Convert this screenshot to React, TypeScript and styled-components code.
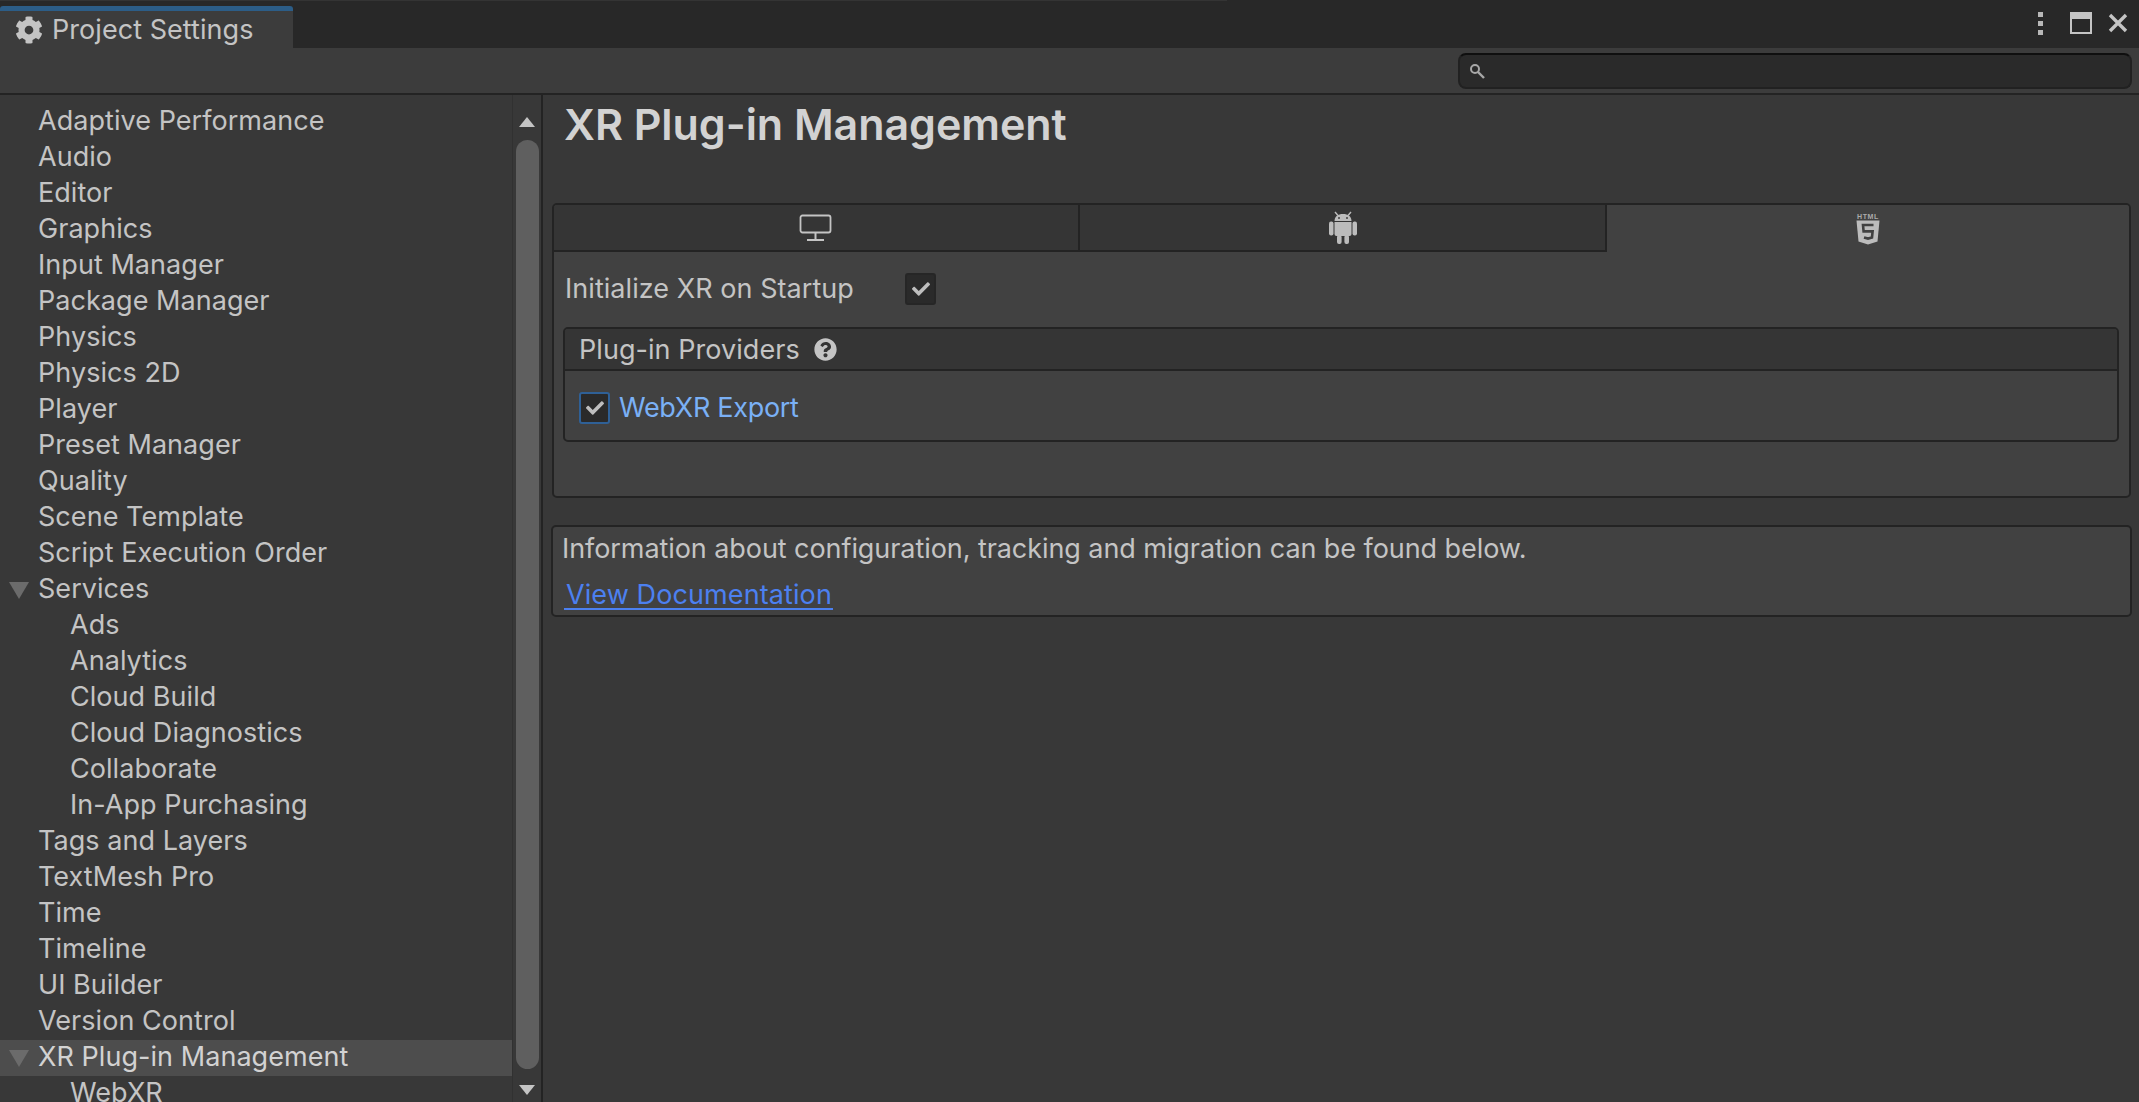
import React from "react";
import styled, { createGlobalStyle } from "styled-components";
import { FaCheck, FaCog, FaQuestionCircle } from "react-icons/fa";

const GlobalStyle = createGlobalStyle`
  html, body {
    margin: 0;
    padding: 0;
    height: 100%;
    overflow: hidden;
    background: #383838;
    font-family: Inter, "Noto Sans", sans-serif;
    color: #c4c4c4;
  }
  * { box-sizing: border-box; }
`;

const items: { label: string; depth?: number; open?: boolean; selected?: boolean }[] = [
  { label: "Adaptive Performance" },
  { label: "Audio" },
  { label: "Editor" },
  { label: "Graphics" },
  { label: "Input Manager" },
  { label: "Package Manager" },
  { label: "Physics" },
  { label: "Physics 2D" },
  { label: "Player" },
  { label: "Preset Manager" },
  { label: "Quality" },
  { label: "Scene Template" },
  { label: "Script Execution Order" },
  { label: "Services", open: true },
  { label: "Ads", depth: 1 },
  { label: "Analytics", depth: 1 },
  { label: "Cloud Build", depth: 1 },
  { label: "Cloud Diagnostics", depth: 1 },
  { label: "Collaborate", depth: 1 },
  { label: "In-App Purchasing", depth: 1 },
  { label: "Tags and Layers" },
  { label: "TextMesh Pro" },
  { label: "Time" },
  { label: "Timeline" },
  { label: "UI Builder" },
  { label: "Version Control" },
  { label: "XR Plug-in Management", open: true, selected: true },
  { label: "WebXR", depth: 1 },
];

const AndroidIcon = () => (
  <svg width="28" height="33" viewBox="0 0 28 33" fill="#bcbcbc">
    <path d="M6 1 L9 4.5 M22 1 L19 4.5" stroke="#bcbcbc" strokeWidth="1.4" />
    <path d="M5.5 10 C5.5 5.5 9 3 14 3 C19 3 22.5 5.5 22.5 10 Z" />
    <circle cx="10" cy="7" r="1" fill="#414141" />
    <circle cx="18" cy="7" r="1" fill="#414141" />
    <path d="M5.5 11 H22.5 V23 Q22.5 25 20.5 25 H7.5 Q5.5 25 5.5 23 Z" />
    <rect x="0" y="10.5" width="4.5" height="14" rx="2" />
    <rect x="23.5" y="10.5" width="4.5" height="14" rx="2" />
    <rect x="8" y="24" width="4.6" height="9" rx="2" />
    <rect x="15.4" y="24" width="4.6" height="9" rx="2" />
  </svg>
);

const Html5Icon = () => (
  <svg width="24" height="32" viewBox="0 0 24 32">
    <text x="12" y="5.6" textAnchor="middle" fontSize="7" fontWeight="700" letterSpacing="0.6" fontFamily="Liberation Sans, sans-serif" fill="#ababab">
      HTML
    </text>
    <path d="M0.5 7.5 H23.5 L21.5 28.5 L12 31.5 L2.5 28.5 Z" fill="#bcbcbc" />
    <path d="M17.5 12 H7 L7.6 18.4 H16.6 L16 24.4 L12 25.6 L8 24.4" fill="none" stroke="#414141" strokeWidth="2.6" />
  </svg>
);

export default function App() {
  return (
    <>
      <GlobalStyle />
      <Page>
        <TitleBar>
          <WindowTab>
            <FaCog size={28} />
            <span>Project Settings</span>
          </WindowTab>
          <WindowButtons>
            <Kebab>
              <i />
              <i />
              <i />
            </Kebab>
            <Maximize />
            <svg width="20" height="20" viewBox="0 0 20 20">
              <path d="M2 2 L18 18 M18 2 L2 18" stroke="#c4c4c4" strokeWidth="3.4" />
            </svg>
          </WindowButtons>
        </TitleBar>
        <Toolbar>
          <SearchField>
            <svg width="17" height="17" viewBox="0 0 17 17" fill="none">
              <circle cx="6" cy="6" r="4" stroke="#a8a8a8" strokeWidth="2" />
              <path d="M9 9 L15 15" stroke="#a8a8a8" strokeWidth="2.4" />
            </svg>
          </SearchField>
        </Toolbar>
        <Body>
          <Sidebar>
            <TreeList>
              {items.map((item) => (
                <TreeRow key={item.label} $selected={item.selected}>
                  <Gutter>{item.open && <OpenArrow />}</Gutter>
                  <TreeLabel $depth={item.depth ?? 0}>{item.label}</TreeLabel>
                </TreeRow>
              ))}
            </TreeList>
            <ScrollTrack>
              <ScrollArrow $down={false} />
              <ScrollThumb />
              <ScrollArrow $down />
            </ScrollTrack>
          </Sidebar>
          <Main>
            <Title>XR Plug-in Management</Title>
            <TabPanel>
              <TabBar>
                <PlatformTab>
                  <svg width="34" height="28" viewBox="0 0 34 28" fill="none">
                    <rect x="1.5" y="1.5" width="30" height="17" rx="2" stroke="#c4c4c4" strokeWidth="1.8" />
                    <path d="M16.5 19 V25 M8 26 H25" stroke="#c4c4c4" strokeWidth="2" />
                  </svg>
                </PlatformTab>
                <PlatformTab>
                  <AndroidIcon />
                </PlatformTab>
                <PlatformTab $active>
                  <Html5Icon />
                </PlatformTab>
              </TabBar>
              <PanelBody>
                <StartupRow>
                  <StartupLabel>Initialize XR on Startup</StartupLabel>
                  <CheckBox>
                    <FaCheck size={18} />
                  </CheckBox>
                </StartupRow>
                <Providers>
                  <ProvidersHeader>
                    <span>Plug-in Providers</span>
                    <FaQuestionCircle size={23} />
                  </ProvidersHeader>
                  <ProviderRow>
                    <CheckBox $focused>
                      <FaCheck size={18} />
                    </CheckBox>
                    <ProviderName>WebXR Export</ProviderName>
                  </ProviderRow>
                </Providers>
              </PanelBody>
            </TabPanel>
            <InfoBox>
              <InfoText>Information about configuration, tracking and migration can be found below.</InfoText>
              <DocLink>View Documentation</DocLink>
            </InfoBox>
          </Main>
        </Body>
      </Page>
    </>
  );
}

const Page = styled.div`
  display: flex;
  flex-direction: column;
  height: 1102px;
  overflow: hidden;
  font-size: 27px;
  letter-spacing: 0.05px;
`;

const TitleBar = styled.div`
  display: flex;
  justify-content: space-between;
  height: 48px;
  padding-top: 6px;
  background: linear-gradient(#343434, #343434) no-repeat 0 0 / 1227px 1px, #282828;
`;

const WindowTab = styled.div`
  display: flex;
  align-items: center;
  gap: 9px;
  width: 293px;
  padding-left: 15px;
  background: #3c3c3c;
  border-top: 5px solid #2c5d87;
  border-radius: 3px 3px 0 0;
  color: #c4c4c4;
`;

const WindowButtons = styled.div`
  display: flex;
  align-items: center;
  gap: 16px;
  padding: 0 11px 8px 0;
`;

const Kebab = styled.div`
  display: flex;
  flex-direction: column;
  gap: 4px;
  margin-right: 11px;

  i {
    display: block;
    width: 5px;
    height: 5px;
    background: #b8b8b8;
  }
`;

const Maximize = styled.div`
  width: 22px;
  height: 22px;
  border: 2px solid #c4c4c4;
  border-top-width: 7px;
`;

const Toolbar = styled.div`
  display: flex;
  justify-content: flex-end;
  align-items: center;
  height: 47px;
  padding: 0 7px 0 0;
  background: #3c3c3c;
  border-bottom: 2px solid #232323;
`;

const SearchField = styled.div`
  display: flex;
  align-items: center;
  width: 674px;
  height: 36px;
  padding: 2px 0 0 9px;
  background: #2a2a2a;
  border: 2px solid #212121;
  border-top-color: #0f0f0f;
  border-radius: 8px;
`;

const Body = styled.div`
  display: flex;
  flex: 1;
  min-height: 0;
`;

const Sidebar = styled.div`
  display: flex;
  flex: 0 0 543px;
  border-right: 2px solid #232323;
`;

const TreeList = styled.div`
  flex: 1;
  padding-top: 9px;
  overflow: hidden;
`;

const TreeRow = styled.div<{ $selected?: boolean }>`
  display: flex;
  align-items: center;
  height: 36px;
  background: ${(p) => (p.$selected ? "#4d4d4d" : "transparent")};
  color: ${(p) => (p.$selected ? "#d2d2d2" : "#c4c4c4")};
`;

const Gutter = styled.div`
  display: flex;
  justify-content: center;
  flex: 0 0 38px;
`;

const OpenArrow = styled.div`
  width: 0;
  height: 0;
  border-left: 10px solid transparent;
  border-right: 10px solid transparent;
  border-top: 17px solid #6b6b6b;
`;

const TreeLabel = styled.span<{ $depth: number }>`
  margin-top: -4px;
  padding-left: ${(p) => p.$depth * 32}px;
  white-space: nowrap;
`;

const ScrollTrack = styled.div`
  display: flex;
  flex-direction: column;
  align-items: center;
  flex: 0 0 29px;
  padding-top: 22px;
  border-left: 1px solid #313131;
`;

const ScrollArrow = styled.div<{ $down: boolean }>`
  flex: none;
  width: 0;
  height: 0;
  border-left: 8px solid transparent;
  border-right: 8px solid transparent;
  border-top: ${(p) => (p.$down ? "10px solid #c4c4c4" : "none")};
  border-bottom: ${(p) => (p.$down ? "none" : "10px solid #c4c4c4")};
`;

const ScrollThumb = styled.div`
  flex: none;
  width: 23px;
  height: 929px;
  margin: 13px 0 16px;
  background: #5f5f5f;
  border-radius: 12px;
`;

const Main = styled.div`
  flex: 1;
  min-width: 0;
  padding: 0 7px 0 8px;
`;

const Title = styled.h1`
  margin: 0;
  height: 108px;
  padding: 0 0 0 13px;
  font-size: 43px;
  line-height: 58px;
  letter-spacing: -0.05px;
  font-weight: 600;
  color: #d2d2d2;
`;

const TabPanel = styled.div`
  margin: 0 1px 0 1px;
  height: 295px;
  background: #414141;
  border: 2px solid #232323;
  border-radius: 5px;
  overflow: hidden;
`;

const TabBar = styled.div`
  display: grid;
  grid-template-columns: 526px 527px 1fr;
  height: 47px;
`;

const PlatformTab = styled.div<{ $active?: boolean }>`
  display: flex;
  align-items: center;
  justify-content: center;
  background: ${(p) => (p.$active ? "#414141" : "#353535")};
  border-bottom: ${(p) => (p.$active ? "none" : "2px solid #232323")};
  border-right: ${(p) => (p.$active ? "none" : "2px solid #232323")};
  color: #c4c4c4;
`;

const PanelBody = styled.div`
  padding: 21px 10px 0 9px;
`;

const StartupRow = styled.div`
  display: flex;
  align-items: center;
  height: 32px;
  margin-left: 2px;
`;

const StartupLabel = styled.span`
  flex: 0 0 340px;
  margin-top: -2px;
`;

const CheckBox = styled.div<{ $focused?: boolean }>`
  display: flex;
  align-items: center;
  justify-content: center;
  width: 31px;
  height: 32px;
  background: #2a2a2a;
  border: 2px solid ${(p) => (p.$focused ? "#2f6096" : "#262626")};
  border-radius: 3px;
  color: #bebebe;
`;

const Providers = styled.div`
  margin-top: 22px;
  height: 115px;
  border: 2px solid #232323;
  border-radius: 5px;
  overflow: hidden;
`;

const ProvidersHeader = styled.div`
  display: flex;
  align-items: center;
  gap: 14px;
  height: 42px;
  padding-left: 14px;
  background: #353535;
  border-bottom: 2px solid #232323;
  color: #c4c4c4;
`;

const ProviderRow = styled.div`
  display: flex;
  align-items: center;
  gap: 9px;
  padding: 20px 0 0 14px;
`;

const ProviderName = styled.span`
  letter-spacing: -0.3px;
  color: #7ab0f5;
`;

const InfoBox = styled.div`
  margin-top: 27px;
  height: 92px;
  padding: 4px 0 0 9px;
  background: #414141;
  border: 2px solid #232323;
  border-radius: 5px;
`;

const InfoText = styled.div`
  line-height: 36px;
  letter-spacing: -0.07px;
`;

const DocLink = styled.div`
  display: inline-block;
  margin: 15px 0 0 2px;
  padding: 0 1px 0 2px;
  line-height: 26px;
  letter-spacing: 0.1px;
  color: #4c80f0;
  border-bottom: 2px solid #4c80f0;
`;
